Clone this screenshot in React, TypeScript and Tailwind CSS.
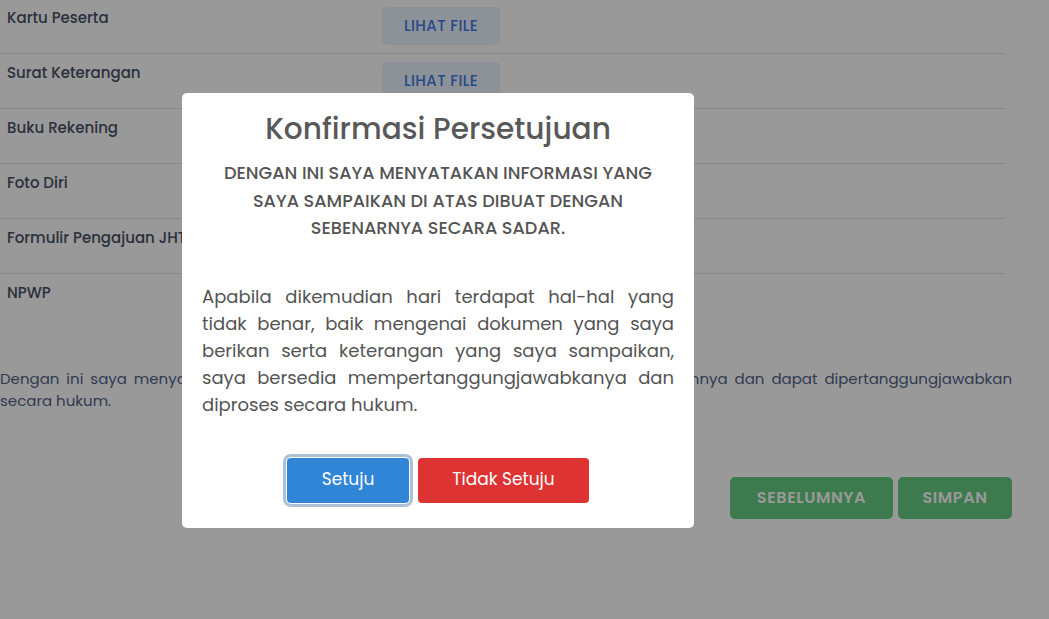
import React from "react";

const docs = [
  "Kartu Peserta",
  "Surat Keterangan",
  "Buku Rekening",
  "Foto Diri",
  "Formulir Pengajuan JHT",
  "NPWP",
];

const bodyLines = [
  "Apabila dikemudian hari terdapat hal-hal yang",
  "tidak benar, baik mengenai dokumen yang saya",
  "berikan serta keterangan yang saya sampaikan,",
  "saya bersedia mempertanggungjawabkanya dan",
];

export default function App() {
  return (
    <div className="relative h-[619px] w-[1049px] overflow-hidden bg-white font-['Poppins','Inter',sans-serif]">
      {/* page behind the dialog */}
      <div className="w-[1012px]">
        <div className="-mt-[1px] w-[1006px]">
          {docs.map((d, i) => (
            <div
              key={d}
              className={i < docs.length - 1 ? "flex h-[55px] items-start border-b border-[#e3e3e3]" : "flex h-[55px] items-start"}
            >
              <div className="w-[382px] pl-[7px] pt-[8px] text-[15px] leading-[22px] font-medium text-[#465164] whitespace-nowrap">{d}</div>
              <button
                type="button"
                className="mt-[8px] flex h-[38px] w-[118px] items-center justify-center rounded-[5px] bg-[#ebf3ff] text-[15px] font-medium tracking-[0.4px] text-[#3f7ae4]"
              >
                LIHAT FILE
              </button>
            </div>
          ))}
        </div>

        <div className="mt-[39px] text-[15px] leading-[22px] text-[#525f87]">
          <span className="block text-justify [text-align-last:justify]">
            Dengan ini saya menyatakan bahwa data yang saya sampaikan adalah benar keadaannya dan dapat dipertanggungjawabkan
          </span>
          <span className="block">secara hukum.</span>
        </div>

        <div className="mt-[65px] flex justify-end gap-[5px]">
          <button type="button" className="h-[42px] w-[163px] rounded-[5px] bg-[#66cc80] text-[16px] font-semibold tracking-[0.6px] text-white">
            SEBELUMNYA
          </button>
          <button type="button" className="h-[42px] w-[114px] rounded-[5px] bg-[#66cc80] text-[16px] font-semibold tracking-[0.6px] text-white">
            SIMPAN
          </button>
        </div>
      </div>

      {/* backdrop + dialog */}
      <div className="absolute inset-0 flex items-start bg-black/40 pt-[93px] pl-[182px]">
        <div className="w-[512px] rounded-[5px] bg-white px-5 pt-[18px] pb-[25px]">
          <h2 className="text-center text-[29.6px] leading-[36px] font-medium text-[#595959]">Konfirmasi Persetujuan</h2>
          <p className="mt-[12px] text-center text-[17.7px] leading-[27.5px] font-medium text-[#545454]">
            DENGAN INI SAYA MENYATAKAN INFORMASI YANG
            <br />
            SAYA SAMPAIKAN DI ATAS DIBUAT DENGAN
            <br />
            SEBENARNYA SECARA SADAR.
          </p>
          <div className="mt-[41px] text-[18px] leading-[27px] text-[#545454]">
            {bodyLines.map((l) => (
              <span key={l} className="block text-justify [text-align-last:justify]">{l}</span>
            ))}
            <span className="block">diproses secara hukum.</span>
          </div>
          <div className="mt-[40px] flex justify-center gap-[9px]">
            <button
              type="button"
              className="h-[45px] w-[122px] rounded-[4px] bg-[#3085d6] text-[17px] text-white shadow-[0_0_0_1px_#fff,0_0_0_4px_rgba(50,100,150,0.4)]"
            >
              Setuju
            </button>
            <button type="button" className="h-[45px] w-[171px] rounded-[4px] bg-[#dd3333] text-[17px] text-white">
              Tidak Setuju
            </button>
          </div>
        </div>
      </div>
    </div>
  );
}
